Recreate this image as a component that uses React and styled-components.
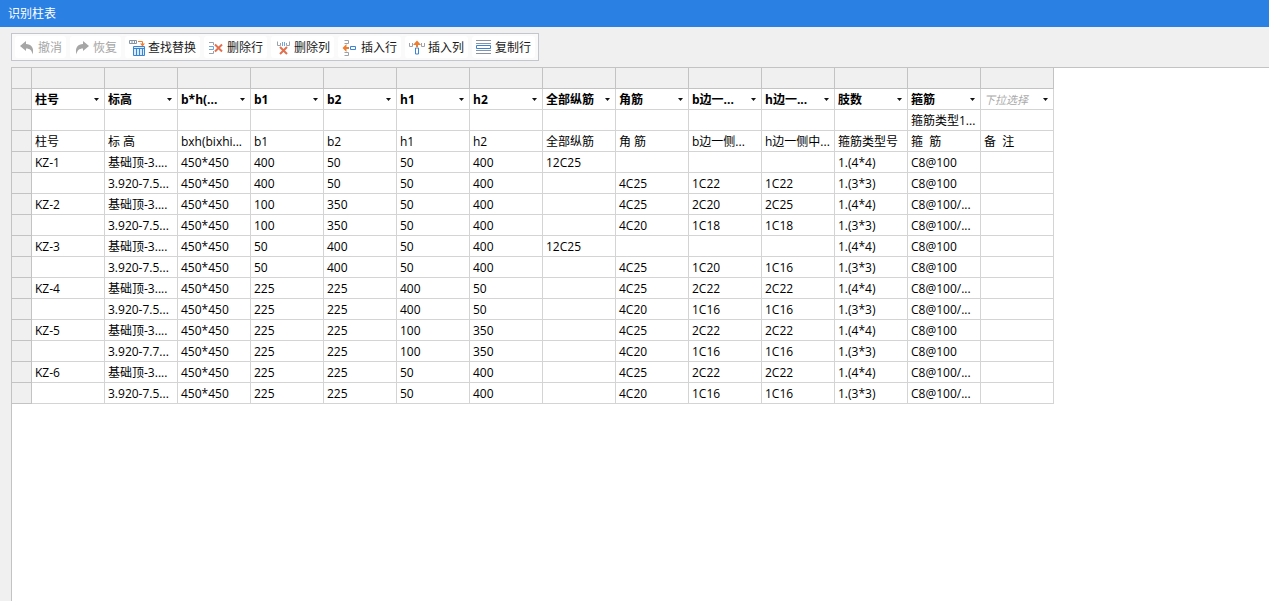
import React from 'react';
import styled, { createGlobalStyle } from 'styled-components';

const tools = [
  { icon: 'undo', label: '撤消', disabled: true },
  { icon: 'redo', label: '恢复', disabled: true },
  { icon: 'replace', label: '查找替换' },
  { icon: 'deleteRow', label: '删除行' },
  { icon: 'deleteColumn', label: '删除列' },
  { icon: 'insertRow', label: '插入行' },
  { icon: 'insertColumn', label: '插入列' },
  { icon: 'copyRow', label: '复制行' },
];

const columns = ['柱号', '标高', 'b*h(...', 'b1', 'b2', 'h1', 'h2', '全部纵筋', '角筋', 'b边一...', 'h边一...', '肢数', '箍筋', ''];

const rows = [
  ['', '', '', '', '', '', '', '', '', '', '', '', '箍筋类型1...', ''],
  ['柱号', '标 高', 'bxh(bixhi...', 'b1', 'b2', 'h1', 'h2', '全部纵筋', '角 筋', 'b边一侧...', 'h边一侧中...', '箍筋类型号', '箍  筋', '备  注'],
  ['KZ-1', '基础顶-3....', '450*450', '400', '50', '50', '400', '12C25', '', '', '', '1.(4*4)', 'C8@100', ''],
  ['', '3.920-7.5...', '450*450', '400', '50', '50', '400', '', '4C25', '1C22', '1C22', '1.(3*3)', 'C8@100', ''],
  ['KZ-2', '基础顶-3....', '450*450', '100', '350', '50', '400', '', '4C25', '2C20', '2C25', '1.(4*4)', 'C8@100/...', ''],
  ['', '3.920-7.5...', '450*450', '100', '350', '50', '400', '', '4C20', '1C18', '1C18', '1.(3*3)', 'C8@100/...', ''],
  ['KZ-3', '基础顶-3....', '450*450', '50', '400', '50', '400', '12C25', '', '', '', '1.(4*4)', 'C8@100', ''],
  ['', '3.920-7.5...', '450*450', '50', '400', '50', '400', '', '4C25', '1C20', '1C16', '1.(3*3)', 'C8@100', ''],
  ['KZ-4', '基础顶-3....', '450*450', '225', '225', '400', '50', '', '4C25', '2C22', '2C22', '1.(4*4)', 'C8@100/...', ''],
  ['', '3.920-7.5...', '450*450', '225', '225', '400', '50', '', '4C20', '1C16', '1C16', '1.(3*3)', 'C8@100/...', ''],
  ['KZ-5', '基础顶-3....', '450*450', '225', '225', '100', '350', '', '4C25', '2C22', '2C22', '1.(4*4)', 'C8@100', ''],
  ['', '3.920-7.7...', '450*450', '225', '225', '100', '350', '', '4C20', '1C16', '1C16', '1.(3*3)', 'C8@100', ''],
  ['KZ-6', '基础顶-3....', '450*450', '225', '225', '50', '400', '', '4C25', '2C22', '2C22', '1.(4*4)', 'C8@100/...', ''],
  ['', '3.920-7.5...', '450*450', '225', '225', '50', '400', '', '4C20', '1C16', '1C16', '1.(3*3)', 'C8@100/...', ''],
];

const icons = {
  undo: <path d="M1 6 7 1V4C12 4 15.5 8 13.5 14.5C13 10.5 11 8.5 7 8.5V11Z" fill="#a6a6a6" />,
  redo: <path d="M15 6 9 1V4C4 4 .5 8 2.5 14.5C3 10.5 5 8.5 9 8.5V11Z" fill="#a6a6a6" />,
  replace: (
    <>
      <path d="M.5 .5H7.5V3.5H.5ZM3 .5V3.5M5.5 .5V3.5" fill="none" stroke="#8794a3" />
      <path d="M9 1.5H13.5V4" fill="none" stroke="#ed7d31" />
      <path d="M11 3.5H16L13.5 6.5Z" fill="#ed7d31" />
      <path d="M4.5 6.5H15.5V15.5H4.5Z" fill="#d9eafa" stroke="#3a84d6" />
      <path d="M5 8.5H15M7.5 8.5V15M10.5 8.5V15M13.5 8.5V15" stroke="#3a84d6" />
    </>
  ),
  deleteRow: (
    <>
      <path d="M1 2.5H5.5V5M1 13.5H5.5V11" fill="none" stroke="#9aa2ab" />
      <path d="M1 6.5H5.5V9.5H1" fill="none" stroke="#6fa5de" />
      <path d="M7 4.5 14 11.5M14 4.5 7 11.5" stroke="#e0704f" strokeWidth="2" />
    </>
  ),
  deleteColumn: (
    <>
      <path d="M2.5 1.5V5.5H5.5V3M14.5 1.5V5.5H11.5V3" fill="none" stroke="#9aa2ab" />
      <path d="M7.5 2V6M9.5 2V6" stroke="#6fa5de" />
      <path d="M5 7 12 14M12 7 5 14" stroke="#e0704f" strokeWidth="2" />
    </>
  ),
  insertRow: (
    <>
      <path d="M2.5 .5H6.5V3.5H2.5M2.5 15.5H6.5V12.5H2.5" fill="none" stroke="#9aa2ab" />
      <path d="M.5 8 4.5 4V7H7V9H4.5V12Z" fill="#ed7d31" />
      <path d="M8.5 6.5H13.5V9.5H8.5Z" fill="none" stroke="#3a84d6" />
    </>
  ),
  insertColumn: (
    <>
      <path d="M.5 3V6.5H3.5V3M12.5 3V6.5H15.5V3" fill="none" stroke="#9aa2ab" />
      <path d="M8 .5 12 5H9V7H7V5H4Z" fill="#ed7d31" />
      <path d="M6.5 8V14H9.5V8Z" fill="none" stroke="#3a84d6" />
    </>
  ),
  copyRow: (
    <>
      <path d="M0 .5H15M0 3.5H15M0 10.5H15M0 13.5H15" stroke="#8b949e" />
      <path d="M.5 5.5H14.5V8.5H.5Z" fill="#fff" stroke="#3a84d6" />
    </>
  ),
};

const App = () => {
  return (
    <Page>
      <GlobalStyle />
      <TitleBar>
        <Title>识别柱表</Title>
      </TitleBar>
      <Content>
        <Toolbar role="toolbar">
          {tools.map(({ icon, label, disabled }) => (
            <ToolButton key={icon} type="button" disabled={disabled}>
              <Icon viewBox="0 0 16 16" aria-hidden="true">{icons[icon]}</Icon>
              {label}
            </ToolButton>
          ))}
        </Toolbar>
        <Panel>
          <Table>
            <colgroup>
              <RowMarkCol />
              {columns.map((_, i) => <DataCol key={i} />)}
            </colgroup>
            <thead>
              <tr>
                <HeadCell />
                {columns.map((_, i) => <HeadCell key={i} />)}
              </tr>
              <tr>
                <HeadCell />
                {columns.map((name, i) => (
                  <FieldCell key={i}>
                    <Field>
                      <FieldSelect aria-label={name || '下拉选择'} $empty={!name}>
                        <option>{name || '下拉选择'}</option>
                      </FieldSelect>
                      <Arrow viewBox="0 0 5 3" aria-hidden="true">
                        <path d="M0 0H5L2.5 3Z" fill="#111" />
                      </Arrow>
                    </Field>
                  </FieldCell>
                ))}
              </tr>
            </thead>
            <tbody>
              {rows.map((row, r) => (
                <tr key={r}>
                  <HeadCell />
                  {row.map((text, c) => <Cell key={c}>{text}</Cell>)}
                </tr>
              ))}
            </tbody>
          </Table>
        </Panel>
      </Content>
    </Page>
  );
};

const GlobalStyle = createGlobalStyle`
*{
  box-sizing:border-box;
}
body{
  margin:0;
  background:#f0f0f0;
  color:#000;
  font:12px/18px "Open Sans", "Noto Sans CJK SC", sans-serif;
}
`;

const Page = styled.div`
display:flex;
flex-direction:column;
min-height:100vh;
`;

const TitleBar = styled.header`
display:flex;
align-items:center;
height:27px;
padding:0 8px;
background:#2b80e4;
`;

const Title = styled.h1`
margin:0;
font-size:12px;
font-weight:normal;
color:#fff;
`;

const Content = styled.main`
display:flex;
flex:1;
flex-direction:column;
align-items:flex-start;
gap:6px;
padding:6px 0 0 11px;
`;

const Toolbar = styled.div`
display:flex;
gap:4px;
height:28px;
padding:2px 3px;
background:#fafafa;
border:1px solid #c3c6cc;
`;

const ToolButton = styled.button`
display:flex;
align-items:center;
gap:3px;
padding:2px 4px 0;
border:0;
border-radius:3px;
background:#fff;
color:#1a1a1a;
font:inherit;
white-space:nowrap;

&:disabled{
  color:#a6a6a6;
}
`;

const Icon = styled.svg`
width:16px;
height:16px;
`;

const Panel = styled.section`
flex:1;
align-self:stretch;
background:#fff;
border-top:1px solid #c3c3c3;
border-left:1px solid #c3c3c3;
`;

const Table = styled.table`
width:1042px;
table-layout:fixed;
border-spacing:0;
`;

const RowMarkCol = styled.col`
width:20px;
`;

const DataCol = styled.col`
width:73px;
`;

const Cell = styled.td`
height:21px;
padding:2px 0 0 3px;
border-right:1px solid #d4d4d4;
border-bottom:1px solid #d4d4d4;
overflow:hidden;
white-space:pre;
`;

const HeadCell = styled.th`
height:21px;
padding:0;
background:#f0f0f0;
border-right:1px solid #c3c3c3;
border-bottom:1px solid #c3c3c3;
`;

const FieldCell = styled(Cell).attrs({ as: 'th', scope: 'col' })`
padding-top:0;
font-weight:normal;
`;

const Field = styled.div`
display:flex;
align-items:center;
position:relative;
height:20px;
`;

const FieldSelect = styled.select`
appearance:none;
width:100%;
height:20px;
padding:2px 0 0;
border:0;
background:transparent;
color:${({ $empty }) => ($empty ? '#aaa' : '#000')};
font:inherit;
font-size:${({ $empty }) => ($empty ? '11px' : '12px')};
font-style:${({ $empty }) => ($empty ? 'italic' : 'normal')};
font-weight:${({ $empty }) => ($empty ? 'normal' : 'bold')};
`;

const Arrow = styled.svg`
position:absolute;
right:5px;
width:5px;
height:3px;
pointer-events:none;
`;

export default App;
